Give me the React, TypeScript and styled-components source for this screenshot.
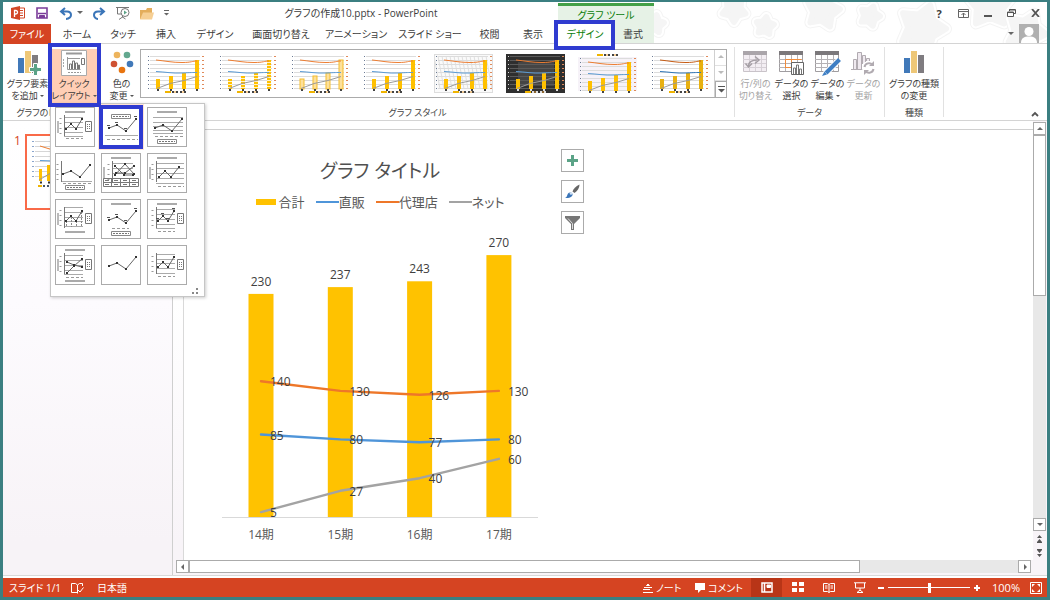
import React from "react";
import styled, { createGlobalStyle, css } from "styled-components";

const GlobalStyle = createGlobalStyle`
  *, *::before, *::after { box-sizing: border-box; }
  body {
    margin: 0;
    font-family: "Open Sans", "Noto Sans CJK JP", sans-serif;
    font-size: 11px;
    font-feature-settings: "palt";
    color: #3c3c3c;
  }
  button {
    margin: 0;
    padding: 0;
    border: 0;
    background: none;
    color: inherit;
    font: inherit;
    font-feature-settings: inherit;
    cursor: pointer;
  }
  svg { display: block; }
`;

const MARK = "#2f3bd0";

const Frame = styled.div`
  display: flex;
  flex-direction: column;
  min-height: 100vh;
  border: 3px solid #3b7f81;
  border-top-width: 2px;
  background: #fff;
  overflow: hidden;
`;

/* ---------- header ---------- */

const Header = styled.header`
  display: flex;
  height: 42px;
  border-bottom: 1px solid #d4d4d4;
`;

const HeaderMain = styled.div`
  flex: 0 0 555px;
`;

const TitleRow = styled.div`
  display: flex;
  align-items: center;
  height: 22px;
`;

const QuickAccess = styled.div`
  display: flex;
  align-items: center;
  gap: 10px;
  width: 169px;
  padding-left: 8px;
`;

const QuickGroup = styled.span`
  display: flex;
  align-items: center;
  gap: 4px;
`;

const DocTitle = styled.h1`
  flex: 1;
  margin: 0 8px 0 0;
  font-size: 10px;
  font-weight: 400;
  line-height: 20px;
  text-align: center;
`;

const TabRow = styled.nav`
  display: flex;
  height: 20px;
`;

const Tab = styled.button<{ $w: number; $tone?: "file" | "active" }>`
  position: relative;
  flex: 0 0 ${(p) => p.$w}px;
  font-size: 10px;
  line-height: 18px;
  white-space: nowrap;
  ${(p) => p.$tone === "file" && css`background: #d54422; color: #fff;`}
  ${(p) =>
    p.$tone === "active" &&
    css`
      height: 20px;
      background: #fff;
      color: #0b7d0b;
      &::after {
        content: "";
        position: absolute;
        inset: -4px -3px -6px -4px;
        border: 4px solid ${MARK};
      }
    `}
`;

const ContextTabs = styled.div`
  position: relative;
  z-index: 1;
  flex: 0 0 96px;
  margin-top: 1px;
  border-top: 3px solid #43a047;
  background: #e6f2e6;
`;

const ContextTitle = styled.div`
  height: 18px;
  color: #0b7d0b;
  font-size: 10px;
  line-height: 18px;
  text-align: center;
`;

const HeaderEnd = styled.div`
  position: relative;
  flex: 1;
  display: flex;
  flex-direction: column;
  align-items: flex-end;
  overflow: hidden;
`;

const Stars = styled.svg`
  position: absolute;
  top: 0;
  left: 0;
`;

const WindowButtons = styled.div`
  position: relative;
  display: flex;
  height: 22px;
  button {
    display: flex;
    align-items: center;
    justify-content: center;
    width: 24px;
  }
`;

const Account = styled.button`
  position: relative;
  display: flex;
  align-items: center;
  gap: 5px;
  margin-right: 8px;
`;

/* ---------- ribbon ---------- */

const Ribbon = styled.section`
  position: relative;
  display: flex;
  height: 77px;
  border-bottom: 1px solid #d4d4d4;
`;

const Group = styled.div<{ $w: number; $line?: boolean }>`
  display: flex;
  flex-direction: column;
  flex: 0 0 ${(p) => p.$w}px;
  margin: 3px 0;
  border-right: ${(p) => (p.$line ? "1px solid #e1e1e1" : "0")};
`;

const GroupBody = styled.div<{ $center?: boolean }>`
  display: flex;
  height: 58px;
  padding: 2px 2px 0;
  justify-content: ${(p) => (p.$center ? "center" : "flex-start")};
`;

const GroupName = styled.div`
  font-size: 9px;
  line-height: 16px;
  text-align: center;
  white-space: nowrap;
  color: #444;
`;

const BigButton = styled.button<{ $w: number; $on?: boolean }>`
  display: flex;
  flex-direction: column;
  align-items: center;
  gap: 2px;
  width: ${(p) => p.$w}px;
  height: 56px;
  padding-top: 1px;
  font-size: 9px;
  line-height: 12px;
  white-space: nowrap;
  background: ${(p) => (p.$on ? "#ffceb5" : "none")};
  &:disabled { color: #a3a3a3; }
`;

const LabelText = styled.span`
  display: block;
`;

const Caret = styled.span`
  display: inline-block;
  margin-left: 2px;
  vertical-align: 2px;
  border: 2px solid transparent;
  border-top-color: #555;
  border-bottom: 0;
`;

const MenuAnchor = styled.div`
  position: relative;
  width: 48px;
  &::after {
    content: "";
    position: absolute;
    z-index: 3;
    inset: -6px -3px -2px -2px;
    border: 4px solid ${MARK};
    pointer-events: none;
  }
`;

const LayoutMenu = styled.div`
  position: absolute;
  z-index: 2;
  top: 54px;
  left: 0;
  width: 155px;
  height: 194px;
  padding: 3px 4px 0;
  border: 1px solid #c6c6c6;
  background: #fff;
  box-shadow: 1px 1px 3px rgba(0, 0, 0, 0.2);
`;

const LayoutGrid = styled.div`
  display: grid;
  grid-template-columns: repeat(3, 40px);
  gap: 6px;
`;

const LayoutOption = styled.button<{ $picked?: boolean }>`
  width: 40px;
  height: 40px;
  border: 1px solid #ababab;
  background: #fff;
  svg { margin: -1px; }
  ${(p) =>
    p.$picked &&
    css`
      outline: 4px solid ${MARK};
      outline-offset: -2px;
      box-shadow: 0 0 0 3px #ffe3d6;
    `}
`;

const MenuGrip = styled.svg`
  margin: 3px 2px 0 auto;
`;

const Gallery = styled.div`
  display: flex;
  flex: 1;
  height: 49px;
  margin-right: 5px;
  border: 1px solid #ababab;
`;

const GalleryItems = styled.div`
  display: flex;
  flex: 1;
  align-items: flex-start;
  gap: 13px;
  padding: 4px 0 0 5px;
`;

const GalleryNav = styled.div`
  display: flex;
  flex-direction: column;
  width: 12px;
  border-left: 1px solid #d0d0d0;
  button {
    display: flex;
    align-items: center;
    justify-content: center;
    flex: 1;
    border-bottom: 1px solid #e1e1e1;
  }
  button:last-child {
    border: 1px solid #ababab;
    border-width: 1px 0 0 1px;
  }
`;

const Collapse = styled.button`
  margin: auto 8px 3px auto;
`;

/* ---------- workspace ---------- */

const Workspace = styled.main`
  display: flex;
  flex: 1;
  border-bottom: 1px solid #d9d9d9;
  background: #f8f4f8;
`;

const SlideList = styled.aside`
  display: flex;
  align-items: flex-start;
  gap: 4px;
  flex: 0 0 170px;
  padding: 13px 0 0 11px;
  border-right: 1px solid #cfcfcf;
  background: linear-gradient(#fff 0, #fdfbfe 180px, #f7f3f7 420px);
`;

const SlideNumber = styled.span`
  width: 7px;
  color: #d54422;
  font-size: 12px;
  line-height: 14px;
`;

const SlideThumb = styled.button`
  width: 100px;
  height: 76px;
  border: 2px solid #f96a48;
  background: #fff;
`;

const Editor = styled.div`
  display: flex;
  flex-direction: column;
  flex: 1;
  min-width: 0;
  padding-bottom: 2px;
`;

const CanvasRow = styled.div`
  display: flex;
  flex: 1;
`;

const Canvas = styled.div`
  display: flex;
  align-items: flex-start;
  flex: 1;
  padding: 19px 0 0 36px;
  margin-left: 10px;
  border-top: 1px solid #d0d0d0;
  border-left: 1px solid #d9d9d9;
  background: #fff;
`;

const CanvasWrap = styled.div`
  display: flex;
  flex: 1;
  padding-top: 8px;
  background: linear-gradient(#fff 0, #fff 180px, #f8f4f8 420px);
`;

const Scroll = styled.div<{ $dir: "row" | "column" }>`
  display: flex;
  flex-direction: ${(p) => p.$dir};
  ${(p) =>
    p.$dir === "row"
      ? css`height: 13px; margin: 0 16px 0 3px;`
      : css`width: 13px; margin: 1px 1px 0 0;`}
`;

const ScrollButton = styled.button`
  display: flex;
  align-items: center;
  justify-content: center;
  flex: 0 0 13px;
  min-width: 13px;
  border: 1px solid #ababab;
  background: #fff;
`;

const ScrollTrack = styled.div<{ $dir: "row" | "column" }>`
  display: flex;
  flex-direction: ${(p) => p.$dir};
  flex: 1;
  background: #e8e8e8;
`;

const ScrollThumb = styled.div<{ $share: number }>`
  flex: 0 0 ${(p) => p.$share}%;
  border: 1px solid #ababab;
  background: #fff;
`;

const PageStep = styled.button`
  display: flex;
  align-items: center;
  justify-content: center;
  height: 14px;
`;

const PageSteps = styled.div`
  padding-top: 1px;
`;

/* ---------- chart ---------- */

const Figure = styled.figure`
  display: flex;
  flex-direction: column;
  align-items: center;
  width: 320px;
  margin: 0;
`;

const ChartTitle = styled.figcaption`
  padding-top: 6px;
  color: #505050;
  font-size: 19px;
  line-height: 32px;
`;

const Legend = styled.ul`
  display: flex;
  gap: 11px;
  margin: 7px 0 0;
  padding: 0;
  list-style: none;
  color: #595959;
  font-size: 13px;
  line-height: 16px;
  li { display: flex; align-items: center; }
`;

const Key = styled.span<{ $color: string; $bar?: boolean }>`
  width: ${(p) => (p.$bar ? 20 : 23)}px;
  height: ${(p) => (p.$bar ? 6 : 2)}px;
  margin-right: ${(p) => (p.$bar ? 3 : 0)}px;
  background: ${(p) => p.$color};
`;

const Plot = styled.svg`
  margin-top: 19px;
  font-size: 12px;
  fill: #404040;
`;

const ChartTools = styled.div`
  display: flex;
  flex-direction: column;
  gap: 8px;
  margin-left: 21px;
`;

const ToolButton = styled.button`
  display: flex;
  align-items: center;
  justify-content: center;
  width: 23px;
  height: 23px;
  border: 1px solid #ababab;
  background: #fff;
`;

/* ---------- status bar ---------- */

const StatusBar = styled.footer`
  display: flex;
  align-items: center;
  height: 19px;
  margin-top: 2px;
  padding: 0 5px 0 6px;
  background: #d54422;
  color: #fff;
  font-size: 10px;
  line-height: 18px;
  white-space: nowrap;
`;

const StatusItem = styled.button<{ $w: number }>`
  display: flex;
  align-items: center;
  gap: 3px;
  width: ${(p) => p.$w}px;
`;

const ViewButton = styled.button<{ $on?: boolean }>`
  display: flex;
  align-items: center;
  justify-content: center;
  width: 31px;
  height: 19px;
  background: ${(p) => (p.$on ? "#b83517" : "none")};
`;

const Spacer = styled.div`
  flex: 1;
`;

const ZoomSlider = styled.input`
  appearance: none;
  width: 82px;
  height: 12px;
  margin: 0 3px;
  background: linear-gradient(#fff, #fff) center / 100% 1px no-repeat;
  &::-webkit-slider-thumb {
    appearance: none;
    width: 3px;
    height: 10px;
    background: #fff;
  }
`;

const ZoomGroup = styled.div`
  display: flex;
  align-items: center;
  margin-left: 2px;
`;

const ZoomStep = styled.button`
  width: 8px;
  height: 14px;
  svg { margin: auto; }
`;

const ZoomValue = styled.button`
  width: 28px;
  margin: 0 10px 0 11px;
  font-size: 11px;
`;

/* ---------- drawings ---------- */

const Tri = ({ d, c = "#666" }: { d: "up" | "down" | "left" | "right"; c?: string }) => {
  const paths = { up: "M0 4h6L3 1z", down: "M0 1h6L3 4z", left: "M4 0v6L1 3z", right: "M2 0v6l3-3z" };
  return (
    <svg width="6" height="6">
      <path d={paths[d]} fill={c} />
    </svg>
  );
};

const starPath = (cx: number, cy: number, r: number, turn: number) => {
  const pts: string[] = [];
  for (let i = 0; i < 10; i++) {
    const a = ((i * 36 + turn) * Math.PI) / 180;
    const k = i % 2 ? r * 0.58 : r;
    pts.push(`${(cx + k * Math.sin(a)).toFixed(1)} ${(cy - k * Math.cos(a)).toFixed(1)}`);
  }
  return `M${pts.join("L")}z`;
};

const STARS: [number, number, number, number][] = [
  [1, 22, 9, 10],
  [80, 8, 12, 36],
  [111, 24, 9, 8],
  [169, 9, 17, 12],
  [216, 14, 10, 20],
  [268, 26, 24, 20],
  [336, 2, 24, 0],
  [372, 30, 20, 24],
];

const StarField = () => (
  <Stars width="393" height="41">
    {STARS.map(([x, y, r, t]) => (
      <g key={x} strokeLinejoin="round">
        <path d={starPath(x, y, r, t)} fill="#f4f4f4" stroke="#f4f4f4" strokeWidth="12" />
        <path d={starPath(x, y, r, t)} fill="#fff" stroke="#fff" strokeWidth="10" />
        <path d={starPath(x, y, r, t)} fill="#f5f5f5" stroke="#f5f5f5" strokeWidth="6" />
      </g>
    ))}
  </Stars>
);

const BarsIcon = ({ plus }: { plus?: boolean }) => (
  <svg width="26" height="26">
    <rect x="3" y="8" width="6" height="15" fill="#4179b9" />
    <rect x="10" y="1" width="6" height="22" fill="#eec777" />
    <rect x="17" y="5" width="6" height="18" fill="#7f7c80" />
    {plus && (
      <path d="M18.500 14.500h4v4h4v4h-4v4h-4v-4h-4v-4h4z" fill="#5ba387" stroke="#fff" transform="translate(0 -1)" />
    )}
  </svg>
);

const QuickLayoutIcon = () => (
  <svg width="28" height="26" fill="none" stroke="#777">
    <path d="M1.500 .5h25v25h-25z" fill="#fff" stroke="#aaa" />
    <path d="M6 3.500h16" stroke="#999" strokeWidth="2" />
    <path d="M7.500 7v12.500h13M20 8.500h-12" stroke="#999" />
    <path d="M9.500 19v-5h2v5M12.500 19v-8h2v8M15.500 19v-6h2v6M18.500 19v-4h1v4" />
    <path d="M21.500 8.500h3v6h-3z" />
    <path d="M3.500 9v9" stroke="#aaa" strokeDasharray="2 1" />
    <path d="M8 22.500h13" stroke="#999" strokeDasharray="2 1" />
  </svg>
);

const ColorsIcon = () => (
  <svg width="26" height="26">
    <circle cx="8" cy="5" r="3.300" fill="#edb45d" />
    <circle cx="18" cy="5" r="3.300" fill="#63a88f" />
    <circle cx="5" cy="14" r="3.300" fill="#cf5132" />
    <circle cx="21" cy="14" r="3.300" fill="#4179b9" />
    <circle cx="13" cy="20" r="3.300" fill="#e8740f" />
  </svg>
);

const SheetIcon = ({ kind }: { kind: "swap" | "select" | "edit" }) => {
  const dim = kind === "swap";
  return (
    <svg width="27" height="26" fill="none">
      <rect x="1" y="1" width="24" height="4" fill={dim ? "#aaa5aa" : "#7b787b"} />
      <path d="M1.500 5v16.500h23V5" fill={dim ? "#f3eef3" : "#fff"} stroke={dim ? "#c9c3c9" : "#a09da0"} />
      <path d="M1 9.500h23M1 13.500h23M1 17.500h23M7.500 5v16M13.500 5v16M19.500 5v16" stroke={dim ? "#d6d0d6" : "#b5b2b5"} />
      {kind === "swap" && (
        <>
          <path d="M6.500 16c0-4 3-6 9-6" stroke="#a49ea4" strokeWidth="1.500" />
          <path d="M13 6.500l4 3.500-4 3.500M3.500 13.500L6.500 17l3.500-3.500" stroke="#a49ea4" strokeWidth="1.500" />
        </>
      )}
      {kind === "select" && (
        <>
          <path d="M7.500 17V9.500h16M13.500 9v8M7 17.500h6" stroke="#f08c3c" />
          <path d="M13.500 12.500h12v12h-12z" fill="#fff" stroke="#666" />
          <path d="M15.500 24v-6h2v6M18.500 24v-9h2v9M21.500 24v-5h2v5" stroke="#777" />
        </>
      )}
      {kind === "edit" && (
        <>
          <path d="M25 10L11 24" stroke="#fff" strokeWidth="6" />
          <path d="M25.500 9.500L12 23" stroke="#3f7fc4" strokeWidth="4" />
          <path d="M10.500 21.500L8 26l5-1.500z" fill="#3f7fc4" />
        </>
      )}
    </svg>
  );
};

const RefreshDataIcon = () => (
  <svg width="27" height="26" fill="none" stroke="#b1abb1">
    <path d="M1 19.500h13M3.500 19V9.500h3V19M7.500 19V2.500h4V19M12.500 14V5.500h3V12M16.500 11V8.500h3V11" fill="#efe9ef" />
    <circle cx="19" cy="18" r="7" fill="#fff" stroke="none" />
    <path d="M14.500 17a4.500 4.500 0 0 1 8-2M23.500 19a4.500 4.500 0 0 1-8 2" strokeWidth="2" />
    <path d="M24 11v5h-5zM14 25v-5h5z" fill="#b1abb1" stroke="none" />
  </svg>
);

type LayoutSpec = {
  name: string;
  title?: boolean;
  shape: "wide" | "narrow" | "mid" | "cross" | "web";
  grid?: number[];
  gridTo?: number;
  gridFrom?: number;
  axis?: boolean;
  yName?: boolean;
  legend?: "top" | "bottom" | "right";
  ticks?: number;
  labels?: boolean;
  xName?: number;
  table?: boolean;
  drops?: boolean;
};

const LAYOUTS: LayoutSpec[] = [
  { name: "レイアウト 1", title: true, shape: "narrow", grid: [10, 15, 20, 25, 29], axis: true, yName: true, legend: "right", ticks: 31 },
  { name: "レイアウト 2", shape: "wide", grid: [28], gridFrom: 4, gridTo: 37, legend: "top", ticks: 32, labels: true },
  { name: "レイアウト 3", title: true, shape: "wide", grid: [10, 15, 19, 23, 26], gridFrom: 6, gridTo: 36, legend: "bottom", ticks: 29 },
  { name: "レイアウト 4", shape: "wide", axis: true, grid: [28], gridFrom: 6, gridTo: 37, legend: "bottom", ticks: 30 },
  { name: "レイアウト 5", title: true, shape: "web", grid: [10, 15, 20], gridFrom: 11, gridTo: 32, axis: true, yName: true, table: true },
  { name: "レイアウト 6", title: true, shape: "mid", grid: [10, 15, 20, 25, 30], gridTo: 37, axis: true, yName: true, ticks: 33 },
  { name: "レイアウト 7", shape: "narrow", grid: [8, 13, 18, 22, 27], axis: true, yName: true, legend: "right", xName: 33, drops: true },
  { name: "レイアウト 8", title: true, shape: "wide", legend: "bottom", ticks: 29, labels: true },
  { name: "レイアウト 9", title: true, shape: "narrow", grid: [10, 15, 20, 25, 29], axis: true, legend: "right", ticks: 32, labels: true },
  { name: "レイアウト 10", title: true, shape: "cross", grid: [10, 15, 20, 25, 29], axis: true, yName: true, legend: "right", ticks: 32, xName: 36 },
  { name: "レイアウト 11", shape: "wide" },
  { name: "レイアウト 12", shape: "narrow", grid: [9, 14, 18, 23, 28], axis: true, legend: "right", ticks: 31 },
];

const SHAPES: Record<LayoutSpec["shape"], [number, number][][]> = {
  wide: [[[8, 21], [16, 18], [25, 24], [35, 12]]],
  narrow: [[[11, 22], [16, 17], [21, 22], [27, 12]]],
  mid: [[[12, 24], [18, 18], [24, 24], [32, 14]]],
  cross: [[[12, 28], [19, 21], [27, 14]], [[12, 17], [19, 20], [27, 22]]],
  web: [[[14, 13], [23, 22], [32, 22]], [[14, 22], [24, 11], [33, 21]], [[15, 20], [24, 20], [33, 13]]],
};

const LayoutDrawing = ({ s }: { s: LayoutSpec }) => {
  const from = s.gridFrom ?? 9;
  const to = s.gridTo ?? 28;
  const legendY = s.legend === "top" ? 7 : 32;
  return (
    <svg width="40" height="40" fill="none">
      {s.title && <path d="M10 5h20" stroke="#aaa" strokeWidth="2" />}
      {s.grid?.map((y) => (
        <path key={y} d={`M${from} ${y + 0.5}H${to}`} stroke="#aaa" />
      ))}
      {s.axis && (
        <>
          <path d={`M${from + 0.5} 8V29`} stroke="#777" />
          <path d={`M${from - 3.5} 11V28`} stroke="#999" strokeWidth="2" strokeDasharray="1 4" />
        </>
      )}
      {s.yName && <path d="M3 14v12" stroke="#bbb" strokeWidth="2" />}
      {s.ticks && <path d={`M${from + 2} ${s.ticks + 0.5}H${to}`} stroke="#999" strokeDasharray="3 2" />}
      {s.xName && <path d={`M10 ${s.xName}h20`} stroke="#aaa" strokeWidth="2" />}
      {s.drops && <path d="M11.500 22v6M16.500 18v10M21.500 22v6M26.500 13v15" stroke="#888" strokeDasharray="2 1" />}
      {s.legend === "right" && (
        <>
          <path d="M30.500 14.500h6v10h-6z" stroke="#777" fill="#fff" />
          <path d="M32 17.500h3M32 19.500h3M32 21.500h3" stroke="#777" strokeDasharray="1 1" />
        </>
      )}
      {(s.legend === "top" || s.legend === "bottom") && (
        <>
          <path d={`M10.500 ${legendY + 0.5}h19v4h-19z`} stroke="#888" fill="#fff" />
          <path d={`M12 ${legendY + 2.5}h16`} stroke="#777" strokeDasharray="2 1" />
        </>
      )}
      {s.table && (
        <path d="M2.500 25.500h35v8h-35zM2.500 29.500h35M10.500 25.500v8M19.500 25.500v8M28.500 25.500v8M4 27.500h4M4 31.500h4M13 27.500h4M13 31.500h4M22 27.500h4M22 31.500h4M31 27.500h4M31 31.500h4" stroke="#777" />
      )}
      {SHAPES[s.shape].map((pts, i) => (
        <g key={i}>
          <polyline points={pts.map((p) => p.join(",")).join(" ")} stroke="#666" />
          {pts.map(([x, y]) => (
            <rect key={x} x={x - 1} y={y - 1} width="2" height="2" fill="#333" />
          ))}
          {s.labels && pts.map(([x, y]) => <path key={x} d={`M${x - 2} ${y - 2.5}h3`} stroke="#555" />)}
        </g>
      ))}
    </svg>
  );
};

type StyleKind = "plain" | "stripe" | "pale" | "hatch" | "dark" | "tint" | "shade";
const STYLES: StyleKind[] = ["plain", "stripe", "pale", "plain", "hatch", "dark", "tint", "shade"];

const MINI_BARS: [number, number][] = [[10, 25], [23, 22], [36, 19], [49, 6]];

const MiniChart = ({ kind }: { kind: StyleKind }) => {
  const dark = kind === "dark";
  const line = dark ? "#5a5a5a" : "#dcdcdc";
  const shift = kind === "tint" ? 2 : 0;
  return (
    <svg width="59" height="40" fill="none">
      {dark && <rect width="59" height="39" fill="#2f2f2f" />}
      {dark && <rect x="12" y="8" width="36" height="24" fill="#454545" />}
      {kind === "tint" && <rect y="3" width="59" height="34" fill="#f6f2f8" />}
      {kind === "hatch" && (
        <>
          <rect x=".5" y=".5" width="58" height="38" stroke="#ddd" fill="#fafafa" />
          {Array.from({ length: 14 }, (_, i) => (
            <path key={i} d={`M${i * 4} 2l6 33`} stroke="#e0e0e0" />
          ))}
        </>
      )}
      <g transform={`translate(0 ${shift})`}>
        {Array.from({ length: 9 }, (_, i) => (
          <path key={i} d={`M4 ${i * 4 + 2.5}h50`} stroke={line} />
        ))}
        <path d="M2.500 2v34" stroke={dark ? "#ddd" : "#6a7a94"} strokeDasharray="1 3" />
        <path d="M57 2v34" stroke="#e08a5a" strokeWidth="2" strokeDasharray="1 3" />
        {MINI_BARS.map(([x, y]) => (
          <g key={x}>
            <rect x={x} y={y} width="4" height={35 - y} fill={kind === "pale" ? "#fde09a" : kind === "shade" ? "#e8b010" : "#ffc000"} stroke={kind === "pale" ? "#f5bd2c" : "none"} />
            {kind === "stripe" && <path d={`M${x + 2} ${y + 2}V35`} stroke="#fff2c8" strokeWidth="4" strokeDasharray="1 2" />}
            <rect x={x + 1} y="35" width="2" height="2" fill={dark ? "#ddd" : "#444"} />
          </g>
        ))}
        <path d="M10 6C20 7 26 8.500 36 8.500S46 7 51 7" stroke={kind === "shade" ? "#c55a11" : "#ed7d31"} />
        <path d="M10 17.500C20 18 26 19.500 36 19S46 18.500 51 18.500" stroke={kind === "shade" ? "#2e75b6" : "#5b9bd5"} />
        <path d="M11 34.500L24 29.500 38 26.500 51 22.500" stroke="#9a9a9a" />
      </g>
      <g transform={kind === "tint" ? "translate(0 -37)" : undefined}>
        <path d="M19 38h6" stroke="#f0b400" strokeWidth="2" />
        <path d="M26 38h15" stroke={dark ? "#ddd" : "#444"} strokeWidth="2" strokeDasharray="2 2" />
        <path d="M28 38h2M36 38h2" stroke="#ed9d31" strokeWidth="1" />
      </g>
    </svg>
  );
};

const SlidePreview = () => (
  <svg width="96" height="72" fill="none">
    {Array.from({ length: 8 }, (_, i) => (
      <path key={i} d={`M8 ${i * 5 + 5.5}h60`} stroke="#d6d6d6" />
    ))}
    <path d="M6 5v40" stroke="#8aa5cc" strokeWidth="2" strokeDasharray="1 4" />
    <path d="M13 10L26 14 50 14" stroke="#ed7d31" />
    <path d="M13 24.500L26 25 50 26" stroke="#5b9bd5" />
    <path d="M12 33h3v12h-3zM20 29h3v16h-3zM30 26.500h3v18h-3z" fill="#ffc000" />
    <path d="M12 44L22 38 34 34" stroke="#999" />
    <path d="M13 46.500h2M21 46.500h2" stroke="#333" strokeWidth="2" />
    <path d="M11 50h4" stroke="#f0b400" strokeWidth="2" />
    <path d="M16 50h10" stroke="#456" strokeWidth="2" strokeDasharray="2 2" />
  </svg>
);

/* ---------- chart data ---------- */

const PERIODS = ["14期", "15期", "16期", "17期"];
const TOTALS = [230, 237, 243, 270];
const SERIES = [
  { name: "直販", color: "#4f95d9", values: [85, 80, 77, 80] },
  { name: "代理店", color: "#ee7729", values: [140, 130, 126, 130] },
  { name: "ネット", color: "#a3a3a3", values: [5, 27, 40, 60] },
];
const BASE = 288;
const xOf = (i: number) => 41 + i * 79.3;
const yOf = (v: number) => BASE - v * 0.97;

const SalesPlot = () => (
  <Plot width="320" height="316" role="img" aria-label="グラフ">
    {TOTALS.map((v, i) => (
      <rect key={i} x={xOf(i) - 12.5} y={yOf(v)} width="25" height={BASE - yOf(v)} fill="#ffc200" />
    ))}
    <path d={`M2 ${BASE + 0.5}H318`} stroke="#d9d9d9" />
    {SERIES.map((s) => (
      <polyline
        key={s.name}
        points={s.values.map((v, i) => `${xOf(i)},${yOf(v)}`).join(" ")}
        fill="none"
        stroke={s.color}
        strokeWidth="2.400"
        strokeLinecap="round"
        strokeLinejoin="round"
      />
    ))}
    {TOTALS.map((v, i) => (
      <text key={i} x={xOf(i)} y={yOf(v) - 8} textAnchor="middle">{v}</text>
    ))}
    {SERIES.map((s) =>
      s.values.map((v, i) => (
        <text key={s.name + i} x={xOf(i) + 9} y={yOf(v) + 5}>{v}</text>
      ))
    )}
    {PERIODS.map((p, i) => (
      <text key={p} x={xOf(i)} y={BASE + 22} textAnchor="middle" fill="#595959">{p}</text>
    ))}
  </Plot>
);

const TABS: [string, number][] = [
  ["ホーム", 52],
  ["タッチ", 40],
  ["挿入", 46],
  ["デザイン", 52],
  ["画面切り替え", 80],
  ["アニメーション", 70],
  ["スライド ショー", 78],
  ["校閲", 41],
  ["表示", 46],
];

const TwoLines = ({ a, b, menu }: { a: string; b: string; menu?: boolean }) => (
  <span>
    <LabelText>{a}</LabelText>
    <LabelText>
      {b}
      {menu && <Caret />}
    </LabelText>
  </span>
);

export default function App() {
  return (
    <>
      <GlobalStyle />
      <Frame>
        <Header>
          <HeaderMain>
            <TitleRow>
              <QuickAccess>
                <svg width="15" height="14" fill="none">
                  <path d="M6 2h7.500v10H6" stroke="#d24726" fill="#fff" />
                  <path d="M9 4.500h3M9 7h3M9 9.500h3" stroke="#d24726" />
                  <path d="M0 2l9-2v14l-9-2z" fill="#d24726" />
                  <path d="M3.500 11V4.500h1.300a1.700 1.700 0 0 1 0 3.500H3.500" stroke="#fff" strokeWidth="1.300" />
                </svg>
                <button aria-label="上書き保存">
                  <svg width="13" height="12" fill="none" stroke="#7a3b99">
                    <path d="M1 1h10v10H1z" strokeWidth="1.600" fill="#fff" />
                    <path d="M2 6.500h8" strokeWidth="1.500" />
                    <path d="M3.500 11V8.500h5V11" fill="#7a3b99" />
                  </svg>
                </button>
                <QuickGroup>
                  <button aria-label="元に戻す">
                    <svg width="14" height="13" fill="none" stroke="#3a75b8" strokeWidth="2">
                      <path d="M2 4.500h6c3 0 4 2 4 3.500s-1.500 4-5 4M6 1L2 4.500 6 8" />
                    </svg>
                  </button>
                  <Tri d="down" />
                </QuickGroup>
                <button aria-label="やり直し">
                  <svg width="13" height="13" fill="none" stroke="#3a75b8" strokeWidth="2">
                    <path d="M11 4.500H5c-3 0-4 2-4 3.500s1.500 4 4 4M7 1l4 3.500L7 8" />
                  </svg>
                </button>
                <button aria-label="先頭から開始">
                  <svg width="14" height="14" fill="none" stroke="#777">
                    <path d="M0 1.500h13M1.500 1.500v6.500h4M6.500 9v2.500M3 13.500l3.500-2.500 3 2" />
                    <circle cx="9" cy="6.500" r="4" fill="#fff" />
                    <path d="M8 4.500v4l3-2z" fill="#5ba387" stroke="none" />
                  </svg>
                </button>
                <button aria-label="開く">
                  <svg width="14" height="13">
                    <path d="M0 12V3h6l1-2h5v11z" fill="#e3ad5c" />
                    <path d="M3 5.500h11L12 12.500H0z" fill="#f6cf94" />
                  </svg>
                </button>
                <button aria-label="クイック アクセス ツール バーのユーザー設定">
                  <svg width="5" height="6" fill="#666"><path d="M0 0h5v1H0zM0 3h5L2.500 5.500z" /></svg>
                </button>
              </QuickAccess>
              <DocTitle>グラフの作成10.pptx - PowerPoint</DocTitle>
            </TitleRow>
            <TabRow>
              <Tab $w={48} $tone="file">ファイル</Tab>
              {TABS.map(([name, w], i) => (
                <Tab key={i} $w={w}>{name}</Tab>
              ))}
            </TabRow>
          </HeaderMain>
          <ContextTabs>
            <ContextTitle>グラフ ツール</ContextTitle>
            <TabRow>
              <Tab $w={54} $tone="active">デザイン</Tab>
              <Tab $w={42}>書式</Tab>
            </TabRow>
          </ContextTabs>
          <HeaderEnd>
            <StarField />
            <WindowButtons>
              <button aria-label="ヘルプ"><b>?</b></button>
              <button aria-label="リボンの表示オプション">
                <svg width="11" height="9" fill="none" stroke="#666">
                  <path d="M.5.5h10v8H.5zM.5 2.500h10M5.500 8V4M3.500 6l2-2 2 2" />
                </svg>
              </button>
              <button aria-label="最小化">
                <svg width="9" height="9"><path d="M1 6h8v2H1z" fill="#555" /></svg>
              </button>
              <button aria-label="元のサイズに戻す">
                <svg width="9" height="8" fill="none" stroke="#555">
                  <path d="M2.500 2V.5h6v4H7M.5 3h6v4.500h-6zM.5 3.500h6M2 1h6" />
                </svg>
              </button>
              <button aria-label="閉じる">
                <svg width="9" height="8" stroke="#555" strokeWidth="1.800"><path d="M1 0l7 8M8 0L1 8" /></svg>
              </button>
            </WindowButtons>
            <Account aria-label="アカウント">
              <Tri d="down" />
              <svg width="20" height="19">
                <rect width="20" height="19" fill="#b0b0b0" />
                <circle cx="10" cy="7.500" r="4.500" fill="#fff" />
                <path d="M2 19c0-5 3-6.500 8-6.500s8 1.500 8 6.500z" fill="#fff" />
              </svg>
            </Account>
          </HeaderEnd>
        </Header>

        <Ribbon>
          <Group $w={98}>
            <GroupBody>
              <BigButton $w={45}>
                <BarsIcon plus />
                <TwoLines a="グラフ要素" b="を追加" menu />
              </BigButton>
              <MenuAnchor>
                <BigButton $w={48} $on aria-haspopup="menu" aria-expanded="true">
                  <QuickLayoutIcon />
                  <TwoLines a="クイック" b="レイアウト" menu />
                </BigButton>
                <LayoutMenu role="menu" aria-label="クイック レイアウト">
                  <LayoutGrid>
                    {LAYOUTS.map((s, i) => (
                      <LayoutOption key={s.name} role="menuitem" aria-label={s.name} $picked={i === 1}>
                        <LayoutDrawing s={s} />
                      </LayoutOption>
                    ))}
                  </LayoutGrid>
                  <MenuGrip width="6" height="6" fill="#888">
                    <path d="M4 0h2v2H4zM0 4h2v2H0zM4 4h2v2H4z" />
                  </MenuGrip>
                </LayoutMenu>
              </MenuAnchor>
            </GroupBody>
            <GroupName>グラフのレイアウト</GroupName>
          </Group>
          <Group $w={634} $line>
            <GroupBody>
              <BigButton $w={37}>
                <ColorsIcon />
                <TwoLines a="色の" b="変更" menu />
              </BigButton>
              <Gallery>
                <GalleryItems>
                  {STYLES.map((k, i) => (
                    <button key={i} aria-label={`スタイル ${i + 1}`}>
                      <MiniChart kind={k} />
                    </button>
                  ))}
                </GalleryItems>
                <GalleryNav>
                  <button aria-label="前の行"><Tri d="up" c="#bbb" /></button>
                  <button aria-label="次の行"><Tri d="down" c="#bbb" /></button>
                  <button aria-label="その他">
                    <svg width="7" height="7" fill="#555"><path d="M0 0h7v1H0zM0 3h7L3.500 6.500z" /></svg>
                  </button>
                </GalleryNav>
              </Gallery>
            </GroupBody>
            <GroupName>グラフ スタイル</GroupName>
          </Group>
          <Group $w={150} $line>
            <GroupBody $center>
              <BigButton $w={36} disabled>
                <SheetIcon kind="swap" />
                <TwoLines a="行/列の" b="切り替え" />
              </BigButton>
              <BigButton $w={36}>
                <SheetIcon kind="select" />
                <TwoLines a="データの" b="選択" />
              </BigButton>
              <BigButton $w={36}>
                <SheetIcon kind="edit" />
                <TwoLines a="データの" b="編集" menu />
              </BigButton>
              <BigButton $w={36} disabled>
                <RefreshDataIcon />
                <TwoLines a="データの" b="更新" />
              </BigButton>
            </GroupBody>
            <GroupName>データ</GroupName>
          </Group>
          <Group $w={59} $line>
            <GroupBody $center>
              <BigButton $w={54}>
                <BarsIcon />
                <TwoLines a="グラフの種類" b="の変更" />
              </BigButton>
            </GroupBody>
            <GroupName>種類</GroupName>
          </Group>
          <Collapse aria-label="リボンを折りたたむ">
            <svg width="8" height="6" fill="none" stroke="#555" strokeWidth="1.800"><path d="M1 5l3-3 3 3" /></svg>
          </Collapse>
        </Ribbon>

        <Workspace>
          <SlideList>
            <SlideNumber>1</SlideNumber>
            <SlideThumb aria-label="スライド 1"><SlidePreview /></SlideThumb>
          </SlideList>
          <Editor>
            <CanvasRow>
              <CanvasWrap>
                <Canvas>
                  <Figure>
                    <ChartTitle>グラフ タイトル</ChartTitle>
                    <Legend>
                      <li><Key $color="#ffc200" $bar />合計</li>
                      {SERIES.map((s) => (
                        <li key={s.name}><Key $color={s.color} />{s.name}</li>
                      ))}
                    </Legend>
                    <SalesPlot />
                  </Figure>
                  <ChartTools>
                    <ToolButton aria-label="グラフ要素">
                      <svg width="13" height="13"><path d="M5 1h3v4h4v3H8v4H5V8H1V5h4z" fill="#5ba387" /></svg>
                    </ToolButton>
                    <ToolButton aria-label="グラフ スタイル">
                      <svg width="15" height="15">
                        <path d="M14.500.5c-4 1.500-6 4.500-7 7l2 1.500c3-2 5-5 5-8.500z" fill="#666" />
                        <path d="M0 14c2-.5 2-3 3-4.500s4-1.500 4.500.5S5.500 14.500 0 14z" fill="#3a75b8" />
                        <circle cx="6" cy="9.500" r="1.300" fill="#cfe0f2" />
                      </svg>
                    </ToolButton>
                    <ToolButton aria-label="グラフ フィルター">
                      <svg width="15" height="14" fill="none">
                        <path d="M0 0h15v2L9 8v6H6V8L0 2z" fill="#777" />
                        <path d="M3 2.500l4.500 5V13" stroke="#ddd" />
                      </svg>
                    </ToolButton>
                  </ChartTools>
                </Canvas>
              </CanvasWrap>
              <Scroll $dir="column">
                <ScrollButton aria-label="上へ"><Tri d="up" /></ScrollButton>
                <ScrollTrack $dir="column"><ScrollThumb $share={42} /></ScrollTrack>
                <ScrollButton aria-label="下へ"><Tri d="down" /></ScrollButton>
                <PageSteps>
                  <PageStep aria-label="前のスライド">
                    <svg width="13" height="8" fill="#555"><path d="M4 3h5L6.500 0zM4 7h5L6.500 4zM4 7h5v1H4z" /></svg>
                  </PageStep>
                  <PageStep aria-label="次のスライド">
                    <svg width="13" height="8" fill="#555"><path d="M4 0h5v1H4zM4 1h5L6.500 4zM4 5h5L6.500 8z" /></svg>
                  </PageStep>
                </PageSteps>
              </Scroll>
            </CanvasRow>
            <Scroll $dir="row">
              <ScrollButton aria-label="左へ"><Tri d="left" /></ScrollButton>
              <ScrollTrack $dir="row"><ScrollThumb $share={81} /></ScrollTrack>
              <ScrollButton aria-label="右へ"><Tri d="right" /></ScrollButton>
            </Scroll>
          </Editor>
        </Workspace>

        <StatusBar>
          <StatusItem $w={62}>スライド 1/1</StatusItem>
          <StatusItem $w={26} aria-label="スペル チェック">
            <svg width="13" height="12" fill="none" stroke="#fff">
              <path d="M6.500 10.500h-6v-9h4l2 1.500v8.500M6.500 3l2-1.500h3V4M7 8l2 2 3.500-4.500" />
            </svg>
          </StatusItem>
          <StatusItem $w={36}>日本語</StatusItem>
          <Spacer />
          <StatusItem $w={52}>
            <svg width="10" height="10" stroke="#fff" fill="#fff">
              <path d="M3.500 2.500h3L5 1zM1 4.500h8M0 6.500h7M0 9.500h10" />
            </svg>
            ノート
          </StatusItem>
          <StatusItem $w={56}>
            <svg width="10" height="11" fill="#fff"><path d="M0 1h10v7H6l-3 3V8H0z" /></svg>
            コメント
          </StatusItem>
          <ViewButton $on aria-label="標準">
            <svg width="12" height="11" fill="none" stroke="#fff">
              <path d="M1 1h10v9H1zM3.500 1v9" strokeWidth="1.500" />
              <path d="M6 3h3.500v2.500H6z" fill="#fff" />
            </svg>
          </ViewButton>
          <ViewButton aria-label="スライド一覧">
            <svg width="12" height="11" fill="#fff"><path d="M0 0h5v4H0zM7 0h5v4H7zM0 6h5v4H0zM7 6h5v4H7z" /></svg>
          </ViewButton>
          <ViewButton aria-label="閲覧表示">
            <svg width="12" height="11" fill="none" stroke="#fff">
              <path d="M.5 1.500h4L6 2.500l1.500-1h4v8h-4L6 10.500l-1.500-1h-4zM6 2.500v8M2 4h2.500M2 6h2.500M7.500 4H10M7.500 6H10" />
            </svg>
          </ViewButton>
          <ViewButton aria-label="スライド ショー">
            <svg width="12" height="11" fill="none" stroke="#fff">
              <path d="M0 .8h12M1.500 1v5h9V1M6 6v3M3 10.500L6 8l3 2.500z" />
            </svg>
          </ViewButton>
          <ZoomGroup>
            <ZoomStep aria-label="縮小">
              <svg width="6" height="6"><path d="M0 2h6v2H0z" fill="#fff" /></svg>
            </ZoomStep>
            <ZoomSlider type="range" min={0} max={100} defaultValue={50} aria-label="ズーム" />
            <ZoomStep aria-label="拡大">
              <svg width="8" height="8"><path d="M3 1h2v2h2v2H5v2H3V5H1V3h2z" fill="#fff" /></svg>
            </ZoomStep>
            <ZoomValue>100%</ZoomValue>
            <button aria-label="ウィンドウに合わせる">
              <svg width="12" height="12" fill="none" stroke="#fff">
                <path d="M.5.5h11v11H.5z" />
                <path d="M2 2h3L2 5zM10 2v3L7 2zM2 10V7l3 3zM10 10H7l3-3z" fill="#fff" stroke="none" />
              </svg>
            </button>
          </ZoomGroup>
        </StatusBar>
      </Frame>
    </>
  );
}
